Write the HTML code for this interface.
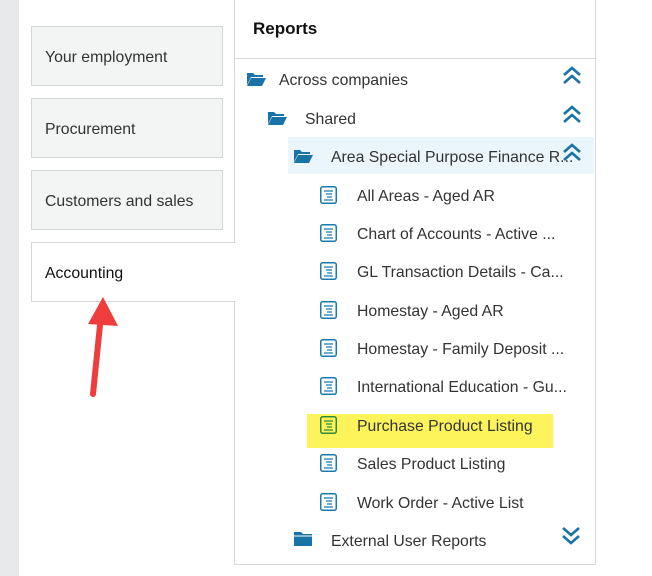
<!DOCTYPE html><html><head><style>
body{margin:0;width:652px;height:576px;background:#fff;position:relative;overflow:hidden;font-family:"Liberation Sans",sans-serif;}
.strip{position:absolute;left:0;top:0;width:19px;height:576px;background:#e8e9eb}
.tab{position:absolute;left:31px;height:58px;border:1px solid #d4d6d8;background:#f3f4f4;font-size:15.8px;color:#333;line-height:62px;padding-left:13px;width:177px}
.panel{position:absolute;left:234px;top:0;width:360px;height:564px;border-left:1px solid #d8d8d8;border-right:1px solid #d8d8d8;border-bottom:1px solid #d8d8d8}
.hdr{position:absolute;left:234px;top:0;width:361px;height:58px;border-bottom:1px solid #d8d8d8}
.hdr span{position:absolute;left:19px;top:19px;font-weight:bold;font-size:17px;color:#111}
.row{position:absolute;height:20px;font-size:15.8px;color:#333;line-height:20px;white-space:nowrap}
</style></head><body>
<div class="strip"></div>
<div class="panel"></div>
<div class="hdr"><span>Reports</span></div>
<div class="tab" style="top:26px">Your employment</div>
<div class="tab" style="top:98px">Procurement</div>
<div class="tab" style="top:170px">Customers and sales</div>
<div class="tab" style="top:242px;background:#fff;border-right:1px solid #fff;width:190px;color:#111">Accounting</div>
<div style="position:absolute;left:288px;top:137px;width:306px;height:37px;background:#eaf6fb"></div>
<div style="position:absolute;left:307px;top:414px;width:246px;height:34px;background:#fcf45a"></div>
<svg width="652" height="576" style="position:absolute;left:0;top:0">
<defs>
<g id="fo"><path d="M0 2h6l2 2h8v2H4L0 14z M4 7h15l-4 8H0z" fill="#1a73a6"/></g>
<g id="fc"><path d="M0 1h7l2 2h9v12H0z" fill="#1a73a6"/><path d="M0 5h18" stroke="#fff" stroke-width="1"/></g>
<g id="rp"><rect x="0.75" y="0.75" width="15.5" height="16.5" rx="2" fill="none" stroke="#1a7ab0" stroke-width="1.5"/><path d="M4 5h9M6 8h6M7 11h5M4 14h9" stroke="#1a7ab0" stroke-width="1.3"/></g>
<g id="up"><path d="M1 8l8-7 8 7M1 16l8-7 8 7" fill="none" stroke="#1a73a6" stroke-width="2.6"/></g>
</defs>
<use href="#fo" x="247" y="71"/><use href="#up" x="563" y="67"/>
<use href="#fo" x="268" y="110"/><use href="#up" x="563" y="106"/>
<use href="#fo" x="294" y="148"/><use href="#up" x="563" y="144"/>
<use href="#rp" x="320" y="186"/><use href="#rp" x="320" y="224"/><use href="#rp" x="320" y="262"/><use href="#rp" x="320" y="301"/><use href="#rp" x="320" y="339"/><use href="#rp" x="320" y="377"/>
<g transform="translate(320,416)"><rect x="0.75" y="0.75" width="15.5" height="16.5" rx="2" fill="none" stroke="#2f8a3c" stroke-width="1.5"/><path d="M4 5h9M6 8h6M7 11h5M4 14h9" stroke="#2f8a3c" stroke-width="1.3"/></g>
<use href="#rp" x="320" y="454"/><use href="#rp" x="320" y="493"/>
<use href="#fc" x="294" y="531"/>
<path d="M563 528l8 7 8-7M563 536l8 7 8-7" fill="none" stroke="#1a73a6" stroke-width="2.6"/>
<path d="M93 394L100 325" stroke="#ef3d3d" stroke-width="6" stroke-linecap="round"/>
<path d="M88 324L103 297L118 326z" fill="#ef3d3d"/>
</svg>
<div class="row" style="left:279px;top:71px">Across companies</div>
<div class="row" style="left:305px;top:110px">Shared</div>
<div class="row" style="left:331px;top:148px">Area Special Purpose Finance R...</div>
<div class="row" style="left:357px;top:187px">All Areas - Aged AR</div>
<div class="row" style="left:357px;top:225px">Chart of Accounts - Active ...</div>
<div class="row" style="left:357px;top:263px">GL Transaction Details - Ca...</div>
<div class="row" style="left:357px;top:302px">Homestay - Aged AR</div>
<div class="row" style="left:357px;top:340px">Homestay - Family Deposit ...</div>
<div class="row" style="left:357px;top:378px">International Education - Gu...</div>
<div class="row" style="left:357px;top:417px">Purchase Product Listing</div>
<div class="row" style="left:357px;top:455px">Sales Product Listing</div>
<div class="row" style="left:357px;top:494px">Work Order - Active List</div>
<div class="row" style="left:331px;top:532px">External User Reports</div>
</body></html>
